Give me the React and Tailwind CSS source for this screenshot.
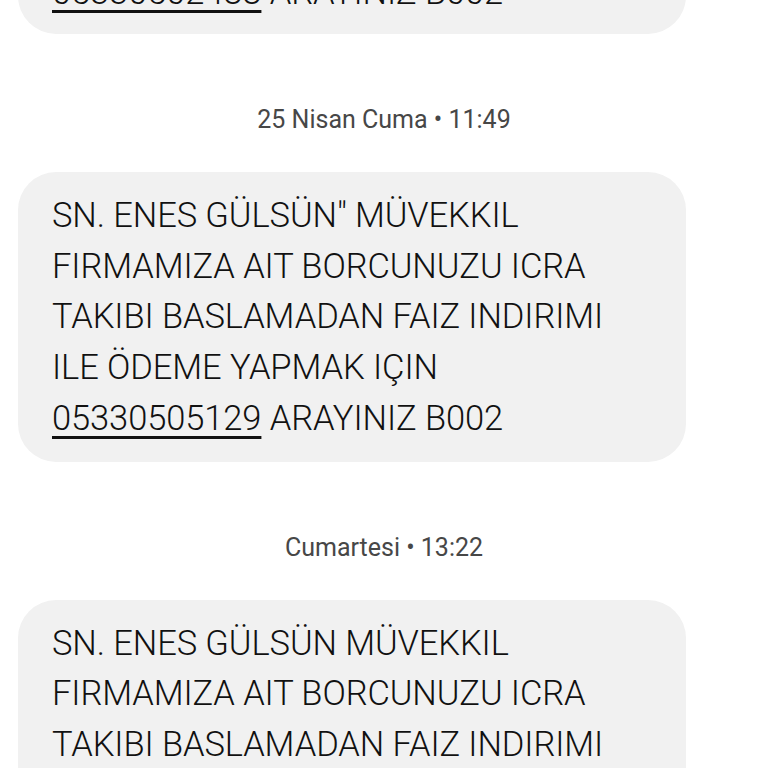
export default function App() {
  const font = { fontFamily: "Roboto, 'Noto Sans', sans-serif" };
  const Bubble = ({ lines, className = "" }) => (
    <div
      className={`ml-[18px] w-[668px] rounded-[38px] bg-[#f1f1f1] pl-[34px] pr-6 py-[18px] text-[34.5px] leading-[50.75px] font-light text-[#111111] tracking-[-0.1px] ${className}`}
    >
      {lines.map((l, i) => (
        <div key={i} className="whitespace-nowrap">
          {l}
        </div>
      ))}
    </div>
  );
  const Phone = ({ n }) => (
    <span className="underline decoration-[3px] underline-offset-[6px]">{n}</span>
  );
  const Stamp = ({ text }) => (
    <div className="flex h-[52px] items-center justify-center text-[25px] text-[#474747]">
      {text}
    </div>
  );

  return (
    <div className="h-[768px] w-[768px] overflow-hidden bg-white" style={font}>
      <Bubble
        className="mt-[-51px] pb-[16px]"
        lines={[
          <>
            <Phone n="05330502488" /> ARAYINIZ B002
          </>,
        ]}
      />
      <div className="mt-[60px]" />
      <Stamp text="25 Nisan Cuma • 11:49" />
      <div className="mt-[26px]" />
      <Bubble
        lines={[
          'SN. ENES GÜLSÜN" MÜVEKKIL',
          "FIRMAMIZA AIT BORCUNUZU ICRA",
          "TAKIBI BASLAMADAN FAIZ INDIRIMI",
          "ILE ÖDEME YAPMAK IÇIN",
          <>
            <Phone n="05330505129" /> ARAYINIZ B002
          </>,
        ]}
      />
      <div className="mt-[60px]" />
      <Stamp text="Cumartesi • 13:22" />
      <div className="mt-[26px]" />
      <Bubble
        lines={[
          "SN. ENES GÜLSÜN MÜVEKKIL",
          "FIRMAMIZA AIT BORCUNUZU ICRA",
          "TAKIBI BASLAMADAN FAIZ INDIRIMI",
          "ILE ÖDEME YAPMAK IÇIN",
          <>
            <Phone n="05330505129" /> ARAYINIZ B002
          </>,
        ]}
      />
    </div>
  );
}
